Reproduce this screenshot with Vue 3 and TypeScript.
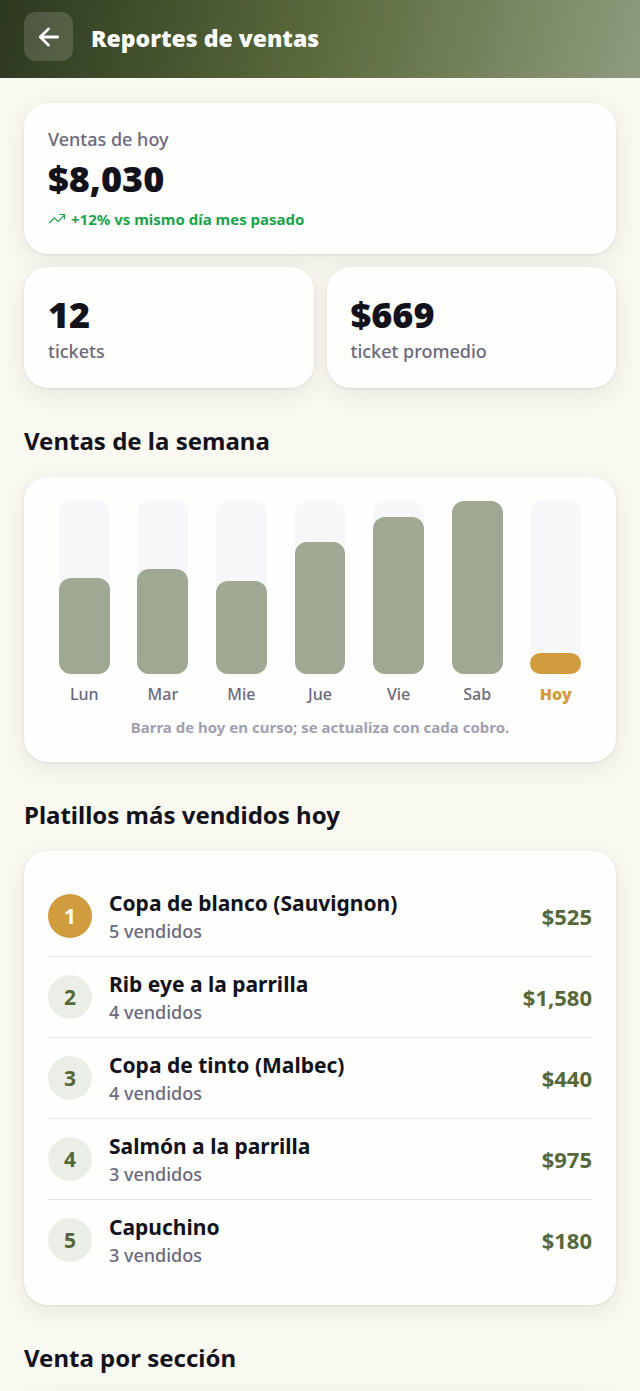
<script setup lang="ts">
interface Day {
  label: string
  percent: number
  today?: boolean
}

interface Dish {
  name: string
  sold: number
  total: string
}

const week: Day[] = [
  { label: 'Lun', percent: 55.5 },
  { label: 'Mar', percent: 60.5 },
  { label: 'Mie', percent: 53.5 },
  { label: 'Jue', percent: 76.5 },
  { label: 'Vie', percent: 90.5 },
  { label: 'Sab', percent: 100 },
  { label: 'Hoy', percent: 12, today: true },
]

const dishes: Dish[] = [
  { name: 'Copa de blanco (Sauvignon)', sold: 5, total: '$525' },
  { name: 'Rib eye a la parrilla', sold: 4, total: '$1,580' },
  { name: 'Copa de tinto (Malbec)', sold: 4, total: '$440' },
  { name: 'Salmón a la parrilla', sold: 3, total: '$975' },
  { name: 'Capuchino', sold: 3, total: '$180' },
]
</script>

<template>
  <div class="page">
    <header class="topbar">
      <button class="back" type="button" aria-label="Volver">
        <svg width="26" height="26" viewBox="0 0 24 24" fill="none" stroke="currentColor" stroke-width="2.6" stroke-linecap="round" stroke-linejoin="round" aria-hidden="true">
          <path d="M20 12H4M11.500 4.500 4 12l7.500 7.500" />
        </svg>
      </button>
      <h1>Reportes de ventas</h1>
    </header>

    <main class="content">
      <section class="summary">
        <article class="card stat wide">
          <p class="label">Ventas de hoy</p>
          <p class="amount">$8,030</p>
          <p class="trend">
            <svg width="18" height="18" viewBox="0 0 24 24" fill="none" stroke="currentColor" stroke-width="1.6" stroke-linecap="round" stroke-linejoin="round" aria-hidden="true">
              <path d="M2 17 8.500 10.500l5 5L22 6.500M16 6h6v6" />
            </svg>
            <span>+12% vs mismo día mes pasado</span>
          </p>
        </article>
        <article class="card stat">
          <p class="amount">12</p>
          <p class="label">tickets</p>
        </article>
        <article class="card stat">
          <p class="amount">$669</p>
          <p class="label">ticket promedio</p>
        </article>
      </section>

      <h2>Ventas de la semana</h2>
      <section class="card chart">
        <div class="bars">
          <div v-for="day in week" :key="day.label" class="day" :class="{ today: day.today }">
            <div class="track">
              <div class="fill" :style="{ height: day.percent + '%' }"></div>
            </div>
            <span class="day-label">{{ day.label }}</span>
          </div>
        </div>
        <p class="note">Barra de hoy en curso; se actualiza con cada cobro.</p>
      </section>

      <h2>Platillos más vendidos hoy</h2>
      <ol class="card dishes">
        <li v-for="(dish, index) in dishes" :key="dish.name" class="dish">
          <span class="rank" :class="{ first: index === 0 }">{{ index + 1 }}</span>
          <div class="info">
            <span class="name">{{ dish.name }}</span>
            <span class="sold">{{ dish.sold }} vendidos</span>
          </div>
          <span class="total">{{ dish.total }}</span>
        </li>
      </ol>

      <h2>Venta por sección</h2>
      <section class="card sections"></section>
    </main>
  </div>
</template>

<style>
body {
  margin: 0;
  background: #f9f8f1;
}
</style>

<style scoped>
.page {
  height: 100vh;
  overflow: hidden;
  font-family: "Noto Sans", "Open Sans", sans-serif;
  color: #13121b;
  background: #f9f8f1;
}
h1,
h2,
p,
ol {
  margin: 0;
  padding: 0;
}
.topbar {
  display: flex;
  align-items: center;
  gap: 18px;
  padding: 12px 24px 17px;
  background: linear-gradient(105deg, #2d3820 0%, #5a6b3c 50%, #8f9b7e 100%);
  color: #fff;
}
.back {
  display: flex;
  align-items: center;
  justify-content: center;
  width: 49px;
  height: 49px;
  padding: 0;
  border: 0;
  border-radius: 12px;
  background: rgba(255, 255, 255, 0.15);
  color: #fff;
}
h1 {
  padding-top: 2px;
  font-size: 23px;
  line-height: 32px;
  font-weight: 900;
}
.content {
  display: flex;
  flex-direction: column;
  padding: 25px 24px 24px;
}
.card {
  border-radius: 24px;
  background: #fefefd;
  box-shadow: 0 1px 3px rgba(20, 20, 30, 0.08), 0 6px 24px rgba(20, 20, 30, 0.08);
}
.summary {
  display: grid;
  grid-template-columns: 1fr 1fr;
  gap: 13px;
}
.wide {
  grid-column: 1 / -1;
}
.stat {
  padding: 24px;
}
.label {
  font-size: 18px;
  line-height: 25px;
  font-weight: 500;
  color: #6b687c;
}
.wide .label {
  padding-bottom: 3px;
}
.amount {
  font-size: 36px;
  line-height: 48px;
  font-weight: 900;
}
.trend {
  display: flex;
  align-items: center;
  gap: 5px;
  padding-top: 5px;
  font-size: 15px;
  line-height: 22px;
  font-weight: 700;
  color: #18a44b;
}
h2 {
  padding: 35px 0 18px;
  font-size: 24px;
  line-height: 36px;
  font-weight: 700;
}
.chart {
  padding: 24px;
}
.bars {
  display: flex;
  gap: 6px;
}
.day {
  flex: 1;
  display: flex;
  flex-direction: column;
  align-items: center;
  gap: 8px;
}
.track {
  display: flex;
  align-items: flex-end;
  width: 70%;
  height: 173px;
  border-radius: 12px;
  background: #f7f7fa;
}
.fill {
  width: 100%;
  border-radius: 12px;
  background: #9fa893;
}
.day-label {
  font-size: 16px;
  line-height: 24px;
  font-weight: 500;
  color: #6b687c;
}
.today .fill {
  background: #d09c3d;
}
.today .day-label {
  font-weight: 900;
  color: #d09c3d;
}
.note {
  padding-top: 11px;
  font-size: 15px;
  line-height: 21px;
  font-weight: 700;
  text-align: center;
  color: #a19fb1;
}
.dishes {
  padding: 25px 24px 24px;
  list-style: none;
}
.dish {
  display: flex;
  align-items: center;
  gap: 17px;
  height: 80px;
  border-bottom: 1px solid #e0e3ea;
}
.dish:last-child {
  border-bottom-color: transparent;
}
.rank {
  display: flex;
  align-items: center;
  justify-content: center;
  width: 44px;
  height: 44px;
  border-radius: 50%;
  background: #ebeee7;
  color: #566839;
  font-size: 21px;
  font-weight: 700;
}
.rank.first {
  background: #d09c3d;
  color: #fff;
}
.info {
  flex: 1;
  display: flex;
  flex-direction: column;
}
.name {
  font-size: 21px;
  line-height: 30px;
  font-weight: 700;
}
.sold {
  font-size: 18px;
  line-height: 26px;
  font-weight: 500;
  color: #6b687c;
}
.total {
  font-size: 22px;
  font-weight: 700;
  color: #566839;
}
.sections {
  height: 120px;
}
</style>
